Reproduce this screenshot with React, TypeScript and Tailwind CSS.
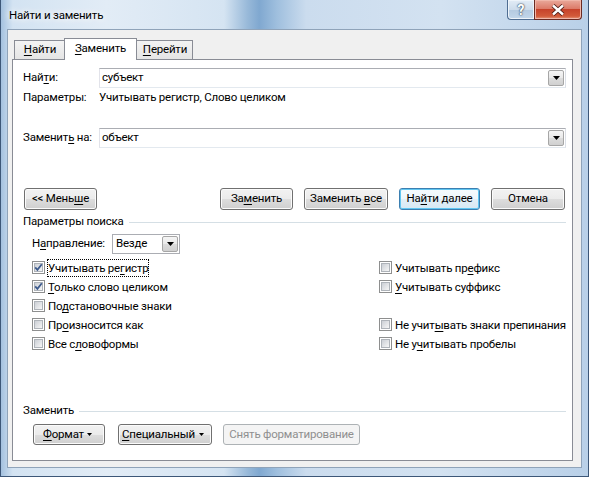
import type { ReactNode } from "react";
import clsx from "clsx";

// Mnemonic letter (Alt+key) underline
const U = ({ children }: { children: ReactNode }) => (
  <span className="underline decoration-1 underline-offset-[2px]">{children}</span>
);

const Arrow = ({ small }: { small?: boolean }) => (
  <svg width={small ? 5 : 7} height={small ? 3 : 4} viewBox={small ? "0 0 5 3" : "0 0 7 4"}>
    <path d={small ? "M0 0H5L2.5 3Z" : "M0 0H7L3.5 4Z"} fill="#000" />
  </svg>
);

const DropButton = () => (
  <span className="mr-[1px] flex h-[16px] w-[16px] shrink-0 items-center justify-center rounded-[2px] border border-[#a6a6a6] bg-[linear-gradient(#f5f5f5_0%,#e9e9e9_50%,#dcdcdc_51%,#d0d0d0_100%)]">
    <Arrow />
  </span>
);

const Combo = ({ value }: { value: string }) => (
  <div className="flex h-[20px] flex-1 items-center border border-[#abadb3] border-b-[#e3e9ef] border-l-[#e2e3ea] border-r-[#dbdfe6] bg-white">
    <span className="flex-1 pl-[2px] leading-none">{value}</span>
    <DropButton />
  </div>
);

type BtnProps = {
  children: ReactNode;
  className?: string;
  primary?: boolean;
  disabled?: boolean;
  menu?: boolean;
};

const Btn = ({ children, className, primary, disabled, menu }: BtnProps) => (
  <button
    className={clsx(
      "flex shrink-0 items-center rounded-[3px] border leading-none",
      menu ? "justify-between" : "justify-center",
      primary &&
        "border-[#3c7fb1] bg-[linear-gradient(#f6fbfe_0%,#eef6fb_50%,#e2eff7_51%,#d7e9f4_100%)] shadow-[inset_0_0_0_1px_#61c6f1]",
      disabled && "border-[#adb2b5] bg-[#f4f4f4] text-[#8f8f8f]",
      !primary &&
        !disabled &&
        "border-[#707070] bg-[linear-gradient(#f2f2f2_0%,#ebebeb_50%,#dddddd_51%,#cfcfcf_100%)] shadow-[inset_0_0_0_1px_#fbfbfb]",
      className
    )}
  >
    <span className="whitespace-nowrap">{children}</span>
    {menu && <Arrow small />}
  </button>
);

const Check = ({
  label,
  checked,
  focused,
}: {
  label: ReactNode;
  checked?: boolean;
  focused?: boolean;
}) => (
  <div className="flex h-[19px] items-center">
    <span className="relative flex h-[13px] w-[13px] shrink-0 border border-[#8e8f8f] bg-white p-[1px]">
      <span className="flex-1 border border-[#aeb3b9] bg-[linear-gradient(135deg,#cbcfd5,#f6f6f6)]" />
      {checked && (
        <svg className="absolute left-[1px] top-[1px]" width="9" height="9" viewBox="0 0 9 9">
          <path d="M1.2 4.4L3.4 6.8L7.8 1.2" fill="none" stroke="#3d5a8c" strokeWidth="1.8" />
        </svg>
      )}
    </span>
    <span
      className={clsx(
        "ml-[2px] whitespace-nowrap px-[1px] leading-[18px]",
        focused && "outline-1 -outline-offset-1 outline-dotted outline-black"
      )}
    >
      {label}
    </span>
  </div>
);

const Group = ({ title }: { title: ReactNode }) => (
  <div className="flex h-[16px] items-center">
    <span className="whitespace-nowrap leading-none">{title}</span>
    <span className="ml-[5px] h-px flex-1 bg-[#d5dfe5]" />
  </div>
);

export default function App() {
  return (
    <div className="flex h-[477px] w-[589px] flex-col overflow-hidden border-x border-b border-[#3d5778] bg-[linear-gradient(90deg,#a4c1df_0%,#d3e3f2_2%,#e2ecf6_18%,#d5e4f2_38%,#98b9d9_42%,#80a8d0_44%,#9fbfde_47%,#cbdcee_52%,#d3e2f1_75%,#b9d0e8_100%)] font-['Roboto','Noto_Sans',sans-serif] text-[11.5px] tracking-[-0.2px] text-black">
      {/* title bar */}
      <div className="flex h-[29px] shrink-0 items-start">
        <div className="pl-[8px] pt-[7px] leading-[16px] [text-shadow:0_0_6px_#fff,0_0_10px_#fff]">
          Найти и заменить
        </div>
        <div className="ml-auto mr-[6px] flex">
          <div className="flex h-[20px] w-[27px] items-center justify-center rounded-bl-[4px] border border-r-0 border-t-0 border-[#4f6d91] bg-[linear-gradient(#e2ecf6_0%,#cddceb_50%,#b4cae0_51%,#c3d7ea_100%)] shadow-[inset_0_0_0_1px_#eef4fa]">
            <span className="text-[14px] font-bold leading-none text-white [text-shadow:0_0_1px_#24364e,0_0_2px_#24364e]">
              ?
            </span>
          </div>
          <div className="flex h-[20px] w-[48px] items-center justify-center rounded-br-[4px] border border-t-0 border-[#6a2a22] bg-[linear-gradient(#e9a99b_0%,#dc7b69_45%,#c7432b_50%,#d25a3a_85%,#e69a7c_100%)] shadow-[inset_0_0_0_1px_#f0b7aa]">
            <svg width="14" height="12" viewBox="0 0 14 12">
              <path d="M2 1.5L12 10.5M12 1.5L2 10.5" stroke="#4a1a14" strokeWidth="4.2" />
              <path d="M2 1.5L12 10.5M12 1.5L2 10.5" stroke="#fff" strokeWidth="2.4" />
            </svg>
          </div>
        </div>
      </div>

      {/* client area */}
      <div className="mx-[6px] mb-[8px] flex flex-1 flex-col border border-[#8fa3b9] bg-[#f0f0f0] pb-[6px] pl-[4px] pr-[8px] pt-[8px]">
        {/* tabs */}
        <div className="flex h-[21px] shrink-0 items-end">
          <div className="ml-[2px] flex h-[19px] w-[52px] items-center justify-center border border-b-0 border-[#898c95] bg-[linear-gradient(#f3f3f3,#e5e5e5)]">
            <span className="whitespace-nowrap"><U>Н</U>айти</span>
          </div>
          <div className="relative z-10 -mb-px -ml-[2px] flex h-[22px] w-[73px] items-center justify-center border border-b-0 border-[#898c95] bg-white pb-[2px]">
            <span className="whitespace-nowrap"><U>З</U>аменить</span>
          </div>
          <div className="-ml-[2px] flex h-[19px] w-[58px] items-center justify-center border border-b-0 border-[#898c95] bg-[linear-gradient(#f3f3f3,#e5e5e5)] pl-[2px]">
            <span className="whitespace-nowrap"><U>П</U>ерейти</span>
          </div>
        </div>

        {/* tab page */}
        <div className="flex flex-1 flex-col border border-[#898c95] bg-white pl-[10px] pr-[6px]">
          <div className="mt-[8px] flex h-[20px] items-center">
            <span className="w-[76px] shrink-0 whitespace-nowrap leading-none">
              Най<U>т</U>и:
            </span>
            <Combo value="субъект" />
          </div>
          <div className="mt-[2px] flex h-[16px] items-center whitespace-nowrap leading-none">
            <span className="w-[76px] shrink-0">Параметры:</span>
            <span>Учитывать регистр, Слово целиком</span>
          </div>
          <div className="mt-[22px] flex h-[20px] items-center">
            <span className="w-[76px] shrink-0 whitespace-nowrap leading-none">
              Заменит<U>ь</U> на:
            </span>
            <Combo value="объект" />
          </div>

          <div className="mt-[40px] flex h-[22px]">
            <Btn className="ml-[1px] w-[73px]">
              &lt;&lt; Мень<U>ш</U>е
            </Btn>
            <div className="ml-auto mr-[1px] flex gap-[11px]">
              <Btn className="w-[73px]">
                За<U>м</U>енить
              </Btn>
              <Btn className="w-[84px]">
                Заменить <U>в</U>се
              </Btn>
              <Btn primary className="w-[81px]">
                На<U>й</U>ти далее
              </Btn>
              <Btn className="w-[74px]">Отмена</Btn>
            </div>
          </div>

          <div className="mt-[4px]">
            <Group title="Параметры поиска" />
          </div>

          <div className="mt-[4px] flex h-[20px] items-center pl-[9px]">
            <span className="w-[80px] shrink-0 whitespace-nowrap leading-none">
              Н<U>а</U>правление:
            </span>
            <div className="flex h-[20px] w-[68px] items-center border border-[#abadb3] bg-white">
              <span className="flex-1 pl-[3px] leading-none">Везде</span>
              <DropButton />
            </div>
          </div>

          <div className="mt-[4px] flex pl-[9px]">
            <div className="flex w-[347px] shrink-0 flex-col">
              <Check checked focused label={<>Учитывать ре<U>г</U>истр</>} />
              <Check checked label={<><U>Т</U>олько слово целиком</>} />
              <Check label={<>По<U>д</U>становочные знаки</>} />
              <Check label={<>Пр<U>о</U>износится как</>} />
              <Check label={<>Все с<U>л</U>овоформы</>} />
            </div>
            <div className="flex flex-col">
              <Check label={<>Учитывать пр<U>е</U>фикс</>} />
              <Check label={<><U>У</U>читывать суффикс</>} />
              <div className="h-[19px]" />
              <Check label={<>Не учит<U>ы</U>вать знаки препинания</>} />
              <Check label={<>Не у<U>ч</U>итывать пробелы</>} />
            </div>
          </div>

          <div className="mt-[50px]">
            <Group title="Заменить" />
          </div>

          <div className="mt-[5px] flex h-[21px] pl-[10px]">
            <Btn menu className="w-[72px] pl-[9px] pr-[12px]">
              <U>Ф</U>ормат
            </Btn>
            <Btn menu className="ml-[13px] w-[94px] pl-[3px] pr-[7px]">
              <U>С</U>пециальный
            </Btn>
            <Btn disabled className="ml-[11px] w-[137px]">
              Снять форматирование
            </Btn>
          </div>
        </div>
      </div>
    </div>
  );
}
